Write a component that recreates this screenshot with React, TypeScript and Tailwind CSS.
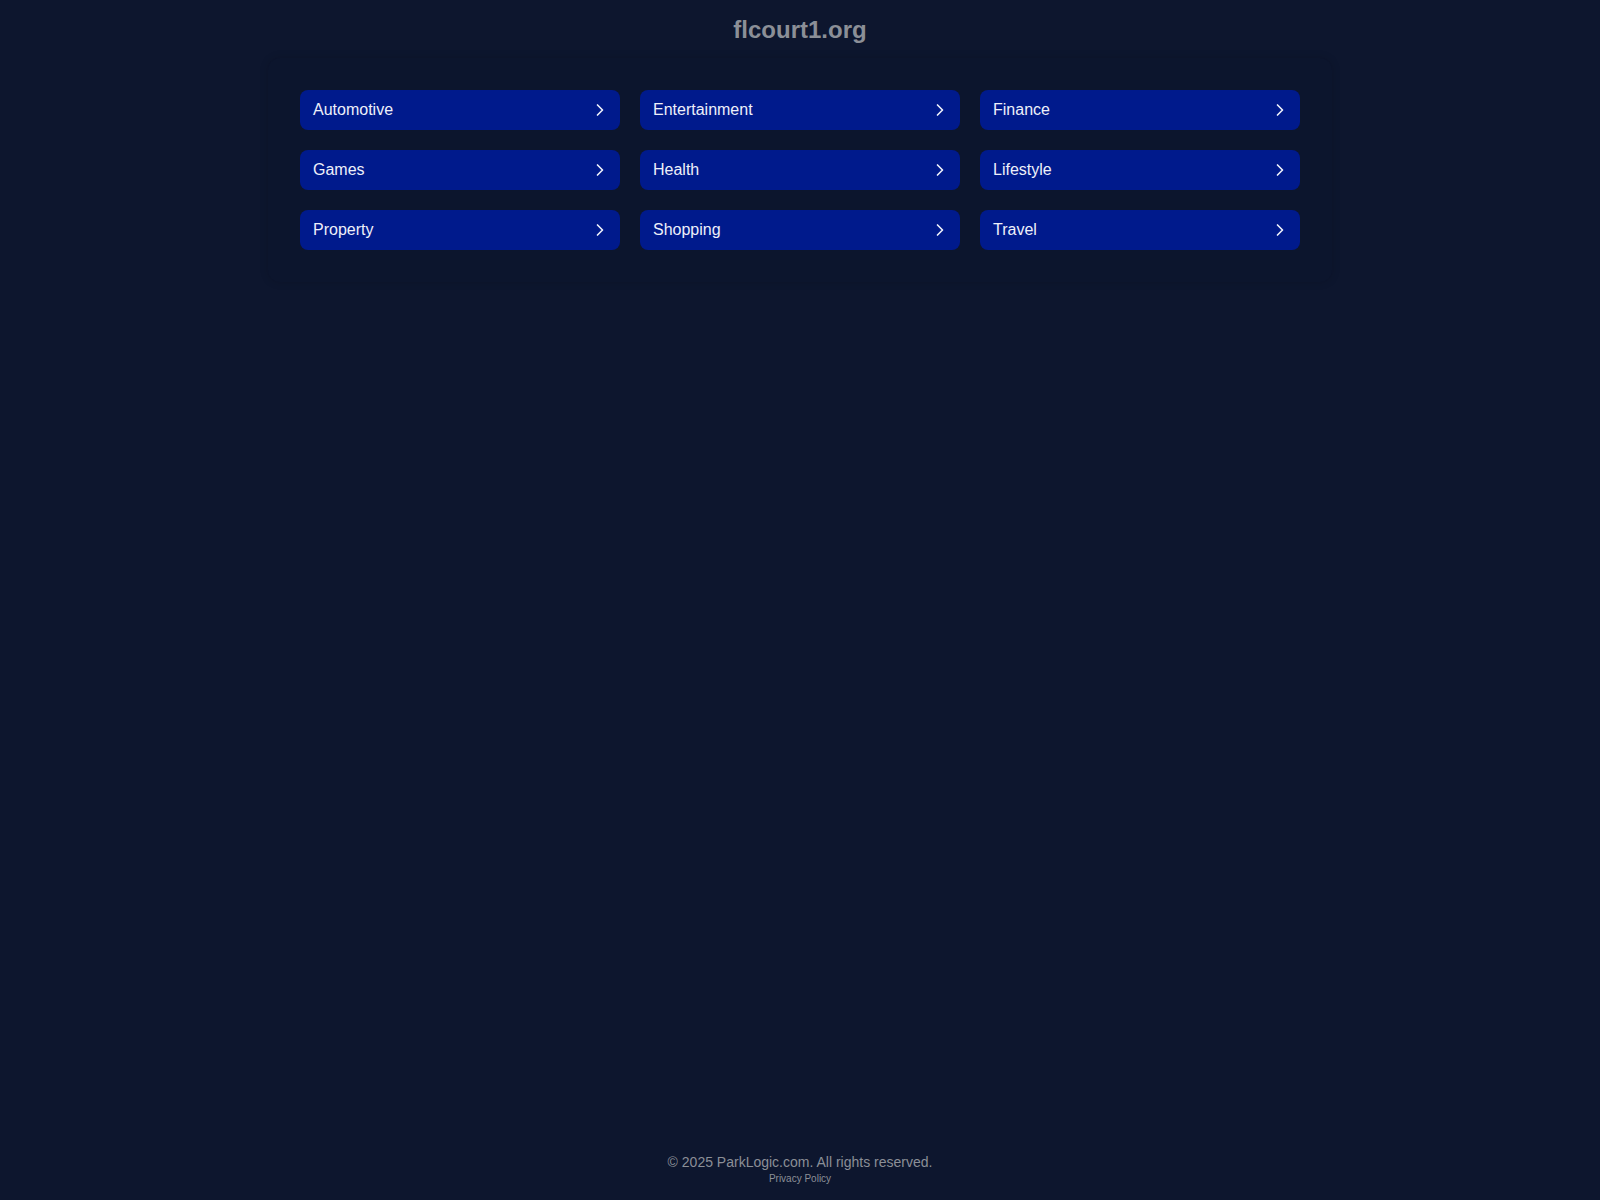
import React from "react";

const items = [
  "Automotive",
  "Entertainment",
  "Finance",
  "Games",
  "Health",
  "Lifestyle",
  "Property",
  "Shopping",
  "Travel",
];

function Chevron() {
  return (
    <svg
      width="20"
      height="20"
      viewBox="0 0 24 24"
      fill="none"
      stroke="currentColor"
      strokeWidth="2"
      strokeLinecap="round"
      strokeLinejoin="round"
    >
      <path d="m9 18 6-6-6-6" />
    </svg>
  );
}

export default function App() {
  return (
    <div
      className="min-h-screen flex flex-col items-center bg-[#0d162e]"
      style={{ fontFamily: '"Liberation Sans", Arial, sans-serif' }}
    >
      <h1 className="pt-[14px] text-2xl leading-8 font-bold text-[#8b8f97]">flcourt1.org</h1>
      <div className="mt-3 w-[1064px] rounded-xl bg-[#0c152d] p-8 shadow-[0_0_8px_rgba(0,0,0,0.15)]">
        <div className="grid grid-cols-3 gap-5">
          {items.map((t) => (
            <a
              key={t}
              href="#"
              className="flex h-10 items-center justify-between rounded-lg bg-[#001a8c] pl-[13px] pr-[10px] text-base text-[#eef0fa]"
            >
              <span>{t}</span>
              <Chevron />
            </a>
          ))}
        </div>
      </div>
      <footer className="mt-auto flex flex-col items-center pb-[14px]">
        <p className="text-sm leading-5 text-[#8b8f97]">© 2025 ParkLogic.com. All rights reserved.</p>
        <a href="#" className="text-[10px] leading-[14px] text-[#8b8f97]">Privacy Policy</a>
      </footer>
    </div>
  );
}
